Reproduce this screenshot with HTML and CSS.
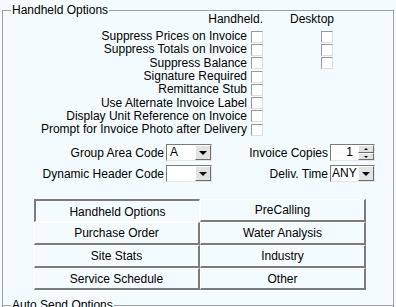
FILE: index.html
```html
<!DOCTYPE html>
<html lang="en">
<head>
    <meta charset="UTF-8">
    <title>Handheld Options</title>
    <link rel="stylesheet" href="styles.css">
</head>
<body>
    <fieldset class="group">
        <legend>Handheld Options</legend>
        <div class="checks">
            <div class="head head-hh">Handheld.</div>
            <div class="head head-dt">Desktop</div>

            <div class="lbl">Suppress Prices on Invoice</div><span class="box"></span><span></span><span class="box"></span>
            <div class="lbl">Suppress Totals on Invoice</div><span class="box"></span><span></span><span class="box"></span>
            <div class="lbl">Suppress Balance</div><span class="box"></span><span></span><span class="box"></span>
            <div class="lbl">Signature Required</div><span class="box"></span><span></span><span></span>
            <div class="lbl">Remittance Stub</div><span class="box"></span><span></span><span></span>
            <div class="lbl">Use Alternate Invoice Label</div><span class="box"></span><span></span><span></span>
            <div class="lbl">Display Unit Reference on Invoice</div><span class="box"></span><span></span><span></span>
            <div class="lbl">Prompt for Invoice Photo after Delivery</div><span class="box"></span><span></span><span></span>
        </div>

        <div class="fields">
            <div class="flbl">Group Area Code</div>
            <div class="combo"><span class="val">A</span><span class="drop"><i class="tri"></i></span></div>
            <div class="flbl">Invoice Copies</div>
            <div class="combo spin"><span class="val num">1</span><span class="spinbtns"><span class="sb"><i class="up"></i></span><span class="sb"><i class="dn"></i></span></span></div>

            <div class="flbl">Dynamic Header Code</div>
            <div class="combo"><span class="val"></span><span class="drop"><i class="tri"></i></span></div>
            <div class="flbl">Deliv. Time</div>
            <div class="combo"><span class="val tight">ANY</span><span class="drop"><i class="tri"></i></span></div>
        </div>

        <div class="tabs">
            <div class="tab on">Handheld Options</div>
            <div class="tab">PreCalling</div>
            <div class="tab">Purchase Order</div>
            <div class="tab">Water Analysis</div>
            <div class="tab">Site Stats</div>
            <div class="tab">Industry</div>
            <div class="tab">Service Schedule</div>
            <div class="tab">Other</div>
        </div>
    </fieldset>
    <fieldset class="group next">
        <legend>Auto Send Options</legend>
        <div class="filler"></div>
    </fieldset>
</body>
</html>
```
FILE: styles.css
```css
html{overflow: hidden;}
body{margin: 0; height: 307px; overflow: hidden; background: #f4fbfe; color: #000; font: 12px "Liberation Sans", Arial, sans-serif;}

.group{margin: 3px 2px 0; padding: 0 0 15px; border: 1px solid #a0a0a0; border-bottom: none; min-width: 0;}
.group legend{margin-left: 8px; padding: 0 1px; line-height: 14px;}
.group.next{margin-top: -7px; padding: 0;}
.filler{height: 40px;}

/* checkbox table */
.checks{display: grid; grid-template-columns: 245px 15px 58px 13px; grid-template-rows: 17px repeat(8, 13.3px); margin-top: -4px; line-height: 13px; white-space: nowrap;}
.head{align-self: start;}
.head-hh{grid-column: 1 / 3; justify-self: end;}
.head-dt{grid-column: 3 / 5; justify-self: end;}
.lbl{text-align: right; padding-right: 1px; align-self: center;}
.box{justify-self: end; align-self: center; width: 12px; height: 12px; box-sizing: border-box; background: #fff; border: 1px solid; border-color: #999 #dedede #dedede #999;}
.checks .box:nth-child(4n+2){justify-self: start;}

/* combos */
.fields{display: grid; grid-template-columns: 161px 46px 114px 45px; grid-auto-rows: 17px; column-gap: 2px; row-gap: 4px; margin-top: 8px;}
.flbl{text-align: right; align-self: center; white-space: nowrap;}
.combo{display: flex; box-sizing: border-box; border: 1px solid; border-color: #7a7a7a #e4e4e4 #e4e4e4 #7a7a7a; background: #fff;}
.val{flex: 1; padding-left: 3px; line-height: 15px;}
.val.tight{padding-left: 1px;}
.val.num{text-align: right; padding-right: 5px;}
.drop{width: 16px; box-sizing: border-box; border: 1px solid; border-color: #fff #6d6d6d #6d6d6d #fff; background: #e2e2e2; display: flex; align-items: center; justify-content: center;}
.tri{width: 0; height: 0; border-left: 4px solid transparent; border-right: 4px solid transparent; border-top: 4px solid #000;}
.spinbtns{width: 16px; display: flex; flex-direction: column;}
.sb{flex: 1; box-sizing: border-box; border: 1px solid; border-color: #fff #6d6d6d #6d6d6d #fff; background: #e2e2e2; display: flex; align-items: center; justify-content: center;}
.up{width: 0; height: 0; border-left: 2px solid transparent; border-right: 2px solid transparent; border-bottom: 2px solid #000;}
.dn{width: 0; height: 0; border-left: 2px solid transparent; border-right: 2px solid transparent; border-top: 2px solid #000;}

/* tab buttons */
.tabs{display: grid; grid-template-columns: 166px 166px; grid-auto-rows: 22.75px; width: 332px; margin: 17px 0 0 31px;}
.tab{box-sizing: border-box; display: flex; align-items: center; justify-content: center; border-style: solid; border-width: 1px 2px 2px 1px; border-color: #fff #7c7c7c #7c7c7c #fff; white-space: nowrap;}
.tab.on{border-width: 2px 1px 1px 2px; border-color: #7c7c7c #fff #fff #7c7c7c; padding-top: 1px;}
```
